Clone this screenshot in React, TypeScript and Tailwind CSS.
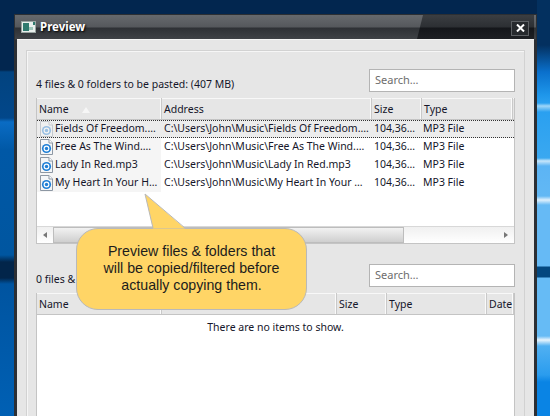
const font = "font-['Noto_Sans',sans-serif]";

function FileIcon({ faded }: { faded?: boolean }) {
  return (
    <svg width="13" height="16" viewBox="0 0 13 16" className={`shrink-0 ${faded ? "opacity-40" : ""}`}>
      <path d="M0.5 0.5H9L12.5 4V15.5H0.5Z" fill="#f4f6f8" stroke="#8d97a3" />
      <path d="M9 0.5V4H12.5" fill="#fff" stroke="#8d97a3" />
      <circle cx="6.5" cy="9.5" r="4.6" fill="#1f7fd6" />
      <circle cx="6.5" cy="9.5" r="2.9" fill="#fff" />
      <circle cx="6.5" cy="9.5" r="1.7" fill="#1f7fd6" />
    </svg>
  );
}

function HeaderCell({ label, w, sort }: { label: string; w: string; sort?: boolean }) {
  return (
    <div className={`${w} flex h-full shrink-0 items-center border-r border-[#fafafa] pl-[3px] pt-[2px] shadow-[1px_0_0_#c9c9c9] first:pl-[2px]`}>
      <span>{label}</span>
      {sort && <span className="ml-[13px] h-0 w-0 border-x-[4px] border-b-[6px] border-x-transparent border-b-[#f6f6f6]" />}
    </div>
  );
}

function Header({ cols }: { cols: { label: string; w: string; sort?: boolean }[] }) {
  return (
    <div className="flex h-[22px] items-center border-b border-[#c4c4c4] bg-[#e6e6e6] shadow-[inset_0_1px_0_#f8f8f8]">
      {cols.map((c) => (
        <HeaderCell key={c.w + c.label} {...c} />
      ))}
    </div>
  );
}

const rows = [
  ["Fields Of Freedom.…", "C:\\Users\\John\\Music\\Fields Of Freedom.…"],
  ["Free As The Wind.…", "C:\\Users\\John\\Music\\Free As The Wind.…"],
  ["Lady In Red.mp3", "C:\\Users\\John\\Music\\Lady In Red.mp3"],
  ["My Heart In Your H…", "C:\\Users\\John\\Music\\My Heart In Your …"],
];

function Search() {
  return (
    <div className="flex h-[23px] w-[146px] items-center border border-[#b4b4b4] bg-white pb-[1px] pl-[5px] text-[11px] text-[#6d6d6d]">
      Search…
    </div>
  );
}

export default function App() {
  return (
    <div className="relative h-[416px] w-[550px] overflow-hidden pl-[14px] pt-[14px] [background:linear-gradient(180deg,#03305f_0px,#03305f_45px,#0a70cc_72px,#1e96ea_95px,#2aa0f0_103px,#9fd6f8_106px,#2aa0f0_112px,#3aa8f0_158px,#c8e6fa_161px,#5cb4f4_166px,#62b8f4_196px,#dff0fc_200px,#66baf5_205px,#66baf5_266px,#03477f_267px,#03477f_277px,#66bbf5_278px,#66bbf5_336px,#e8f4fc_340px,#50b0f2_346px,#2a9cee_375px,#0a84e4_382px,#0a84e4_416px)_right_top/13px_100%_no-repeat,linear-gradient(180deg,#02264f_0px,#02264f_70px,#02437f_72px,#02478a_118px,#0a6cc4_122px,#0058a6_150px,#0056a0_255px,#02254a_262px,#02254a_278px,#0054a0_284px,#0060b4_416px)]">
      <div className={`h-[420px] w-[523px] border border-[#2c2f33] bg-[linear-gradient(180deg,#66696d_0px,#55585c_12px,#2e3135_13px,#3f4246_24px,#2c2f34_25px)] px-[2px] ${font} text-[10.5px] text-[#15162a]`}>
        <div className="relative flex h-[24px] items-center pl-[4px] pr-[5px]">
          <div className="absolute right-0 top-0 h-full w-[117px] bg-[linear-gradient(180deg,#3b3e42_0px,#2c2f33_12px,#14161a_13px,#1e2024_24px)] [clip-path:polygon(6px_0,100%_0,100%_100%,0_100%)]" />
          <svg width="15" height="12" viewBox="0 0 15 12" className="relative">
            <rect x="0.5" y="0.5" width="14" height="11" fill="#e8efec" stroke="#9aa5a2" />
            <rect x="2" y="2" width="6" height="8" fill="#2f7a6e" />
            <rect x="8" y="6" width="4" height="3" fill="#9cc4b8" />
            <rect x="12" y="1" width="2" height="3" fill="#2f7a6e" />
          </svg>
          <span className="relative ml-[4px] text-[11.5px] font-bold text-white [text-shadow:1px_1px_2px_#000]">Preview</span>
          <div className="relative ml-auto mt-[2px] flex h-[15px] w-[18px] items-center justify-center border border-[#5c5f63] bg-[#26292d]">
            <svg width="9" height="8" viewBox="0 0 9 8">
              <path d="M1 0.5L8 7.5M8 0.5L1 7.5" stroke="#fff" strokeWidth="2" />
            </svg>
          </div>
        </div>
        <div className="h-full border-t border-[#f4f4f4] bg-[#e6e6e6] px-[9px] pt-[10px]">
          <div className="h-full border border-[#d2d2d2] px-[9px] pt-[18px] shadow-[inset_1px_1px_0_#f6f6f6]">
            <div className="flex h-[23px] items-end justify-between">
              <span className="mb-[-1px]">4 files &amp; 0 folders to be pasted: (407 MB)</span>
              <Search />
            </div>
            <div className="mt-[6px] h-[146px] border border-t-0 border-[#c4c4c4] bg-white">
              <Header
                cols={[
                  { label: "Name", w: "w-[124px]", sort: true },
                  { label: "Address", w: "w-[210px]" },
                  { label: "Size", w: "w-[50px]" },
                  { label: "Type", w: "w-[91px]" },
                ]}
              />
              <div className="h-[106px]">
                {rows.map((r, i) => (
                  <div
                    key={r[0]}
                    className={`flex h-[18px] items-center whitespace-nowrap ${i === 0 ? "border-y border-dotted border-[#333] bg-[#ececec]" : ""}`}
                  >
                    <div className={`flex h-full w-[124px] shrink-0 items-center gap-[2px] overflow-hidden pl-[3px] ${i > 0 ? "bg-[#f5f5f5]" : ""}`}>
                      <FileIcon faded={i === 0} />
                      <span>{r[0]}</span>
                    </div>
                    <div className="w-[210px] shrink-0 overflow-hidden pl-[3px]">{r[1]}</div>
                    <div className="w-[50px] shrink-0 overflow-hidden pl-[3px]">104,36…</div>
                    <div className="pl-[2px]">MP3 File</div>
                  </div>
                ))}
              </div>
              <div className="flex h-[17px] items-center border-t border-[#d8d8d8] bg-[linear-gradient(180deg,#f0f0f0,#fff)]">
                <div className="flex h-full w-[16px] items-center justify-center">
                  <span className="h-0 w-0 border-y-[3px] border-r-[4px] border-y-transparent border-r-[#777]" />
                </div>
                <div className="h-full w-[351px] border border-[#bdbdbd] bg-[linear-gradient(180deg,#f2f2f2,#cfcfcf)]" />
                <div className="ml-auto flex h-full w-[16px] items-center justify-center">
                  <span className="h-0 w-0 border-y-[3px] border-l-[4px] border-y-transparent border-l-[#777]" />
                </div>
              </div>
            </div>
            <div className="mt-[20px] flex h-[23px] items-end justify-between">
              <span className="mb-[-1px]">0 files &amp;</span>
              <Search />
            </div>
            <div className="mt-[6px] h-[200px] border border-t-0 border-[#c4c4c4] bg-white">
              <Header
                cols={[
                  { label: "Name", w: "w-[124px]" },
                  { label: "", w: "w-[175px]" },
                  { label: "Size", w: "w-[50px]" },
                  { label: "Type", w: "w-[100px]" },
                  { label: "Date", w: "w-[27px]" },
                ]}
              />
              <div className="pt-[5px] text-center">There are no items to show.</div>
            </div>
          </div>
        </div>
      </div>
      <div className="absolute left-[76px] top-[228px] flex h-[82px] w-[231px] items-center justify-center rounded-[22px] border border-[#b9b9b9] bg-[#ffd566] pb-[1px] text-center font-['Liberation_Sans',sans-serif] text-[14.2px] leading-[17px] text-[#1c1c1c]">
        <span>
          Preview files &amp; folders that
          <br />
          will be copied/filtered before
          <br />
          actually copying them.
        </span>
      </div>
      <svg className="absolute left-[144px] top-[193px]" width="44" height="37" viewBox="0 0 44 37">
        <path d="M1 1L41 35.5H9Z" fill="#ffd566" />
        <path d="M9 35L1 1L41 35" fill="none" stroke="#b9b9b9" />
      </svg>
    </div>
  );
}
